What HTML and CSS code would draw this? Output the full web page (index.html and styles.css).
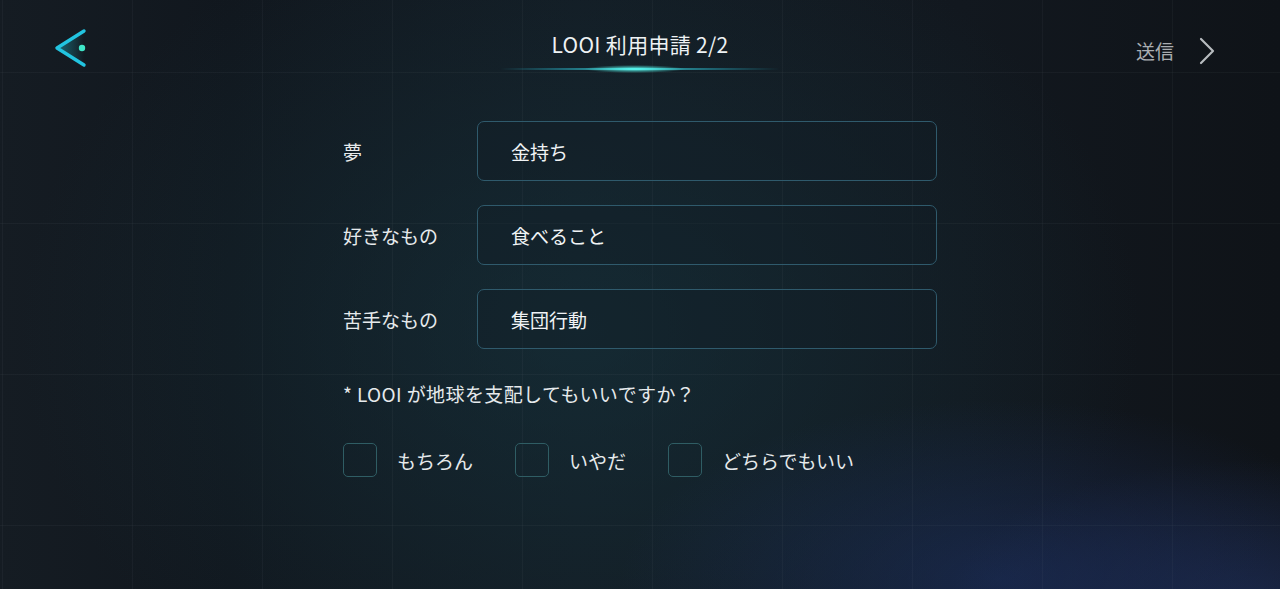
FILE: index.html
```html
<!DOCTYPE html>
<html lang="ja">
<head>
<meta charset="utf-8">
<link rel="stylesheet" href="styles.css">
</head>
<body>
<div class="screen">
  <div class="grid"></div>
  <header class="topbar">
    <button class="back" aria-label="戻る">
      <svg width="40" height="44" viewBox="0 0 40 44">
        <defs>
          <linearGradient id="fill" x1="0" y1="0" x2="1" y2="0">
            <stop offset="0" stop-color="#1fb6c8" stop-opacity="0.9"/>
            <stop offset="1" stop-color="#1fb6c8" stop-opacity="0"/>
          </linearGradient>
        </defs>
        <path d="M32 5 L5 22 L32 39 Z" fill="url(#fill)" opacity="0.55"/>
        <path d="M32 5 L5 22 L32 39" fill="none" stroke="#22c4e0" stroke-width="3.4" stroke-linecap="round" stroke-linejoin="round"/>
        <circle cx="30" cy="22" r="3.2" fill="#3fe6c8"/>
      </svg>
    </button>
    <div class="title-wrap">
      <h1 class="title">LOOI 利用申請 2/2</h1>
      <div class="glow"></div>
    </div>
    <button class="send">
      <span>送信</span>
      <svg width="20" height="30" viewBox="0 0 20 30"><path d="M4 3 L16 15 L4 27" fill="none" stroke="#b7bbbf" stroke-width="2.2" stroke-linecap="round" stroke-linejoin="round"/></svg>
    </button>
  </header>

  <main class="form">
    <div class="row">
      <label class="label">夢</label>
      <div class="field">金持ち</div>
    </div>
    <div class="row">
      <label class="label">好きなもの</label>
      <div class="field">食べること</div>
    </div>
    <div class="row">
      <label class="label">苦手なもの</label>
      <div class="field">集団行動</div>
    </div>
    <p class="question">* LOOI が地球を支配してもいいですか？</p>
    <div class="options">
      <div class="option opt-1"><span class="box"></span><span>もちろん</span></div>
      <div class="option opt-2"><span class="box"></span><span>いやだ</span></div>
      <div class="option"><span class="box"></span><span>どちらでもいい</span></div>
    </div>
  </main>
</div>
</body>
</html>
```

FILE: styles.css
```css
* { box-sizing: border-box; margin: 0; padding: 0; }
html, body { width: 1280px; height: 589px; overflow: hidden; }
body {
  font-family: "Noto Sans CJK JP", "Noto Sans", Roboto, sans-serif;
  color: #e8ecee;
  background: #141a21;
}
.screen {
  position: relative;
  width: 1280px;
  height: 589px;
  overflow: hidden;
  background:
    radial-gradient(ellipse 380px 180px at 1000px 580px, rgba(30,52,110,0.5), rgba(30,52,110,0) 100%),
    radial-gradient(ellipse 300px 140px at 1250px 600px, rgba(40,60,120,0.4), rgba(40,60,120,0) 100%),
    radial-gradient(ellipse 560px 440px at 580px 330px, rgba(22,54,64,0.55), rgba(22,54,64,0) 100%),
    linear-gradient(90deg, #151c23 0%, #11171e 18%, #131b23 45%, #12181f 75%, #0f1318 100%);
}
.grid {
  position: absolute;
  inset: 0;
  pointer-events: none;
  background-image:
    linear-gradient(90deg, rgba(120,130,140,0.07) 1px, transparent 1px),
    linear-gradient(0deg, rgba(120,130,140,0.07) 1px, transparent 1px);
  background-size: 130px 151px, 130px 151px;
  background-position: 2px 0, 0 -78px;
}
.topbar {
  position: relative;
  height: 100px;
  display: flex;
  align-items: flex-start;
  justify-content: space-between;
  padding: 26px 63px 0 52px;
}
button { background: none; border: 0; cursor: pointer; font: inherit; color: inherit; }
.back { width: 40px; height: 44px; display: block; }
.back svg { display: block; }
.title-wrap {
  position: absolute;
  left: 0; right: 0; top: 28px;
  display: flex;
  flex-direction: column;
  align-items: center;
  pointer-events: none;
}
.title {
  font-family: "Noto Sans CJK JP", sans-serif;
  font-weight: 400;
  font-size: 21px;
  line-height: 32px;
  color: #eef2f4;
  letter-spacing: 0.3px;
}
.glow {
  margin-top: 5px;
  width: 280px;
  height: 8px;
  background:
    radial-gradient(ellipse 50px 4px at 48% 50%, rgba(90,250,240,1), rgba(40,200,210,0) 100%),
    linear-gradient(90deg, rgba(40,150,170,0) 0%, rgba(40,170,190,0.5) 22%, rgba(60,215,220,0.85) 48%, rgba(40,170,190,0.5) 75%, rgba(40,150,170,0) 100%);
  background-repeat: no-repeat;
  background-size: 100% 100%, 100% 2px;
  background-position: center, center;
  filter: blur(0.5px);
}
.send {
  display: flex;
  align-items: center;
  gap: 23px;
  margin-top: 10px;
  color: #a9adb1;
  font-size: 19px;
  line-height: 30px;
}
.send svg { display: block; }
.form {
  position: relative;
  width: 594px;
  margin: 21px 0 0 343px;
}
.row {
  display: flex;
  align-items: center;
  height: 60px;
  margin-bottom: 24px;
}
.label {
  width: 134px;
  font-size: 19px;
  color: #e6eaec;
}
.field {
  flex: 1;
  height: 60px;
  border: 1.5px solid #2f5a6c;
  border-radius: 7px;
  padding-left: 33px;
  display: flex;
  align-items: center;
  font-size: 19px;
  color: #f0f3f5;
  background: rgba(16,28,36,0.35);
}
.question {
  margin-top: 32px;
  font-size: 19px;
  line-height: 26px;
  letter-spacing: 0.4px;
  color: #e6eaec;
}
.options {
  display: flex;
  margin-top: 36px;
  align-items: center;
}
.option {
  display: flex;
  align-items: center;
  gap: 20px;
  font-size: 19px;
  color: #e6eaec;
}
.opt-1 { width: 172px; }
.opt-2 { width: 153px; }
.box {
  width: 34px;
  height: 34px;
  border: 1.5px solid #2f5d64;
  border-radius: 5px;
}
```
